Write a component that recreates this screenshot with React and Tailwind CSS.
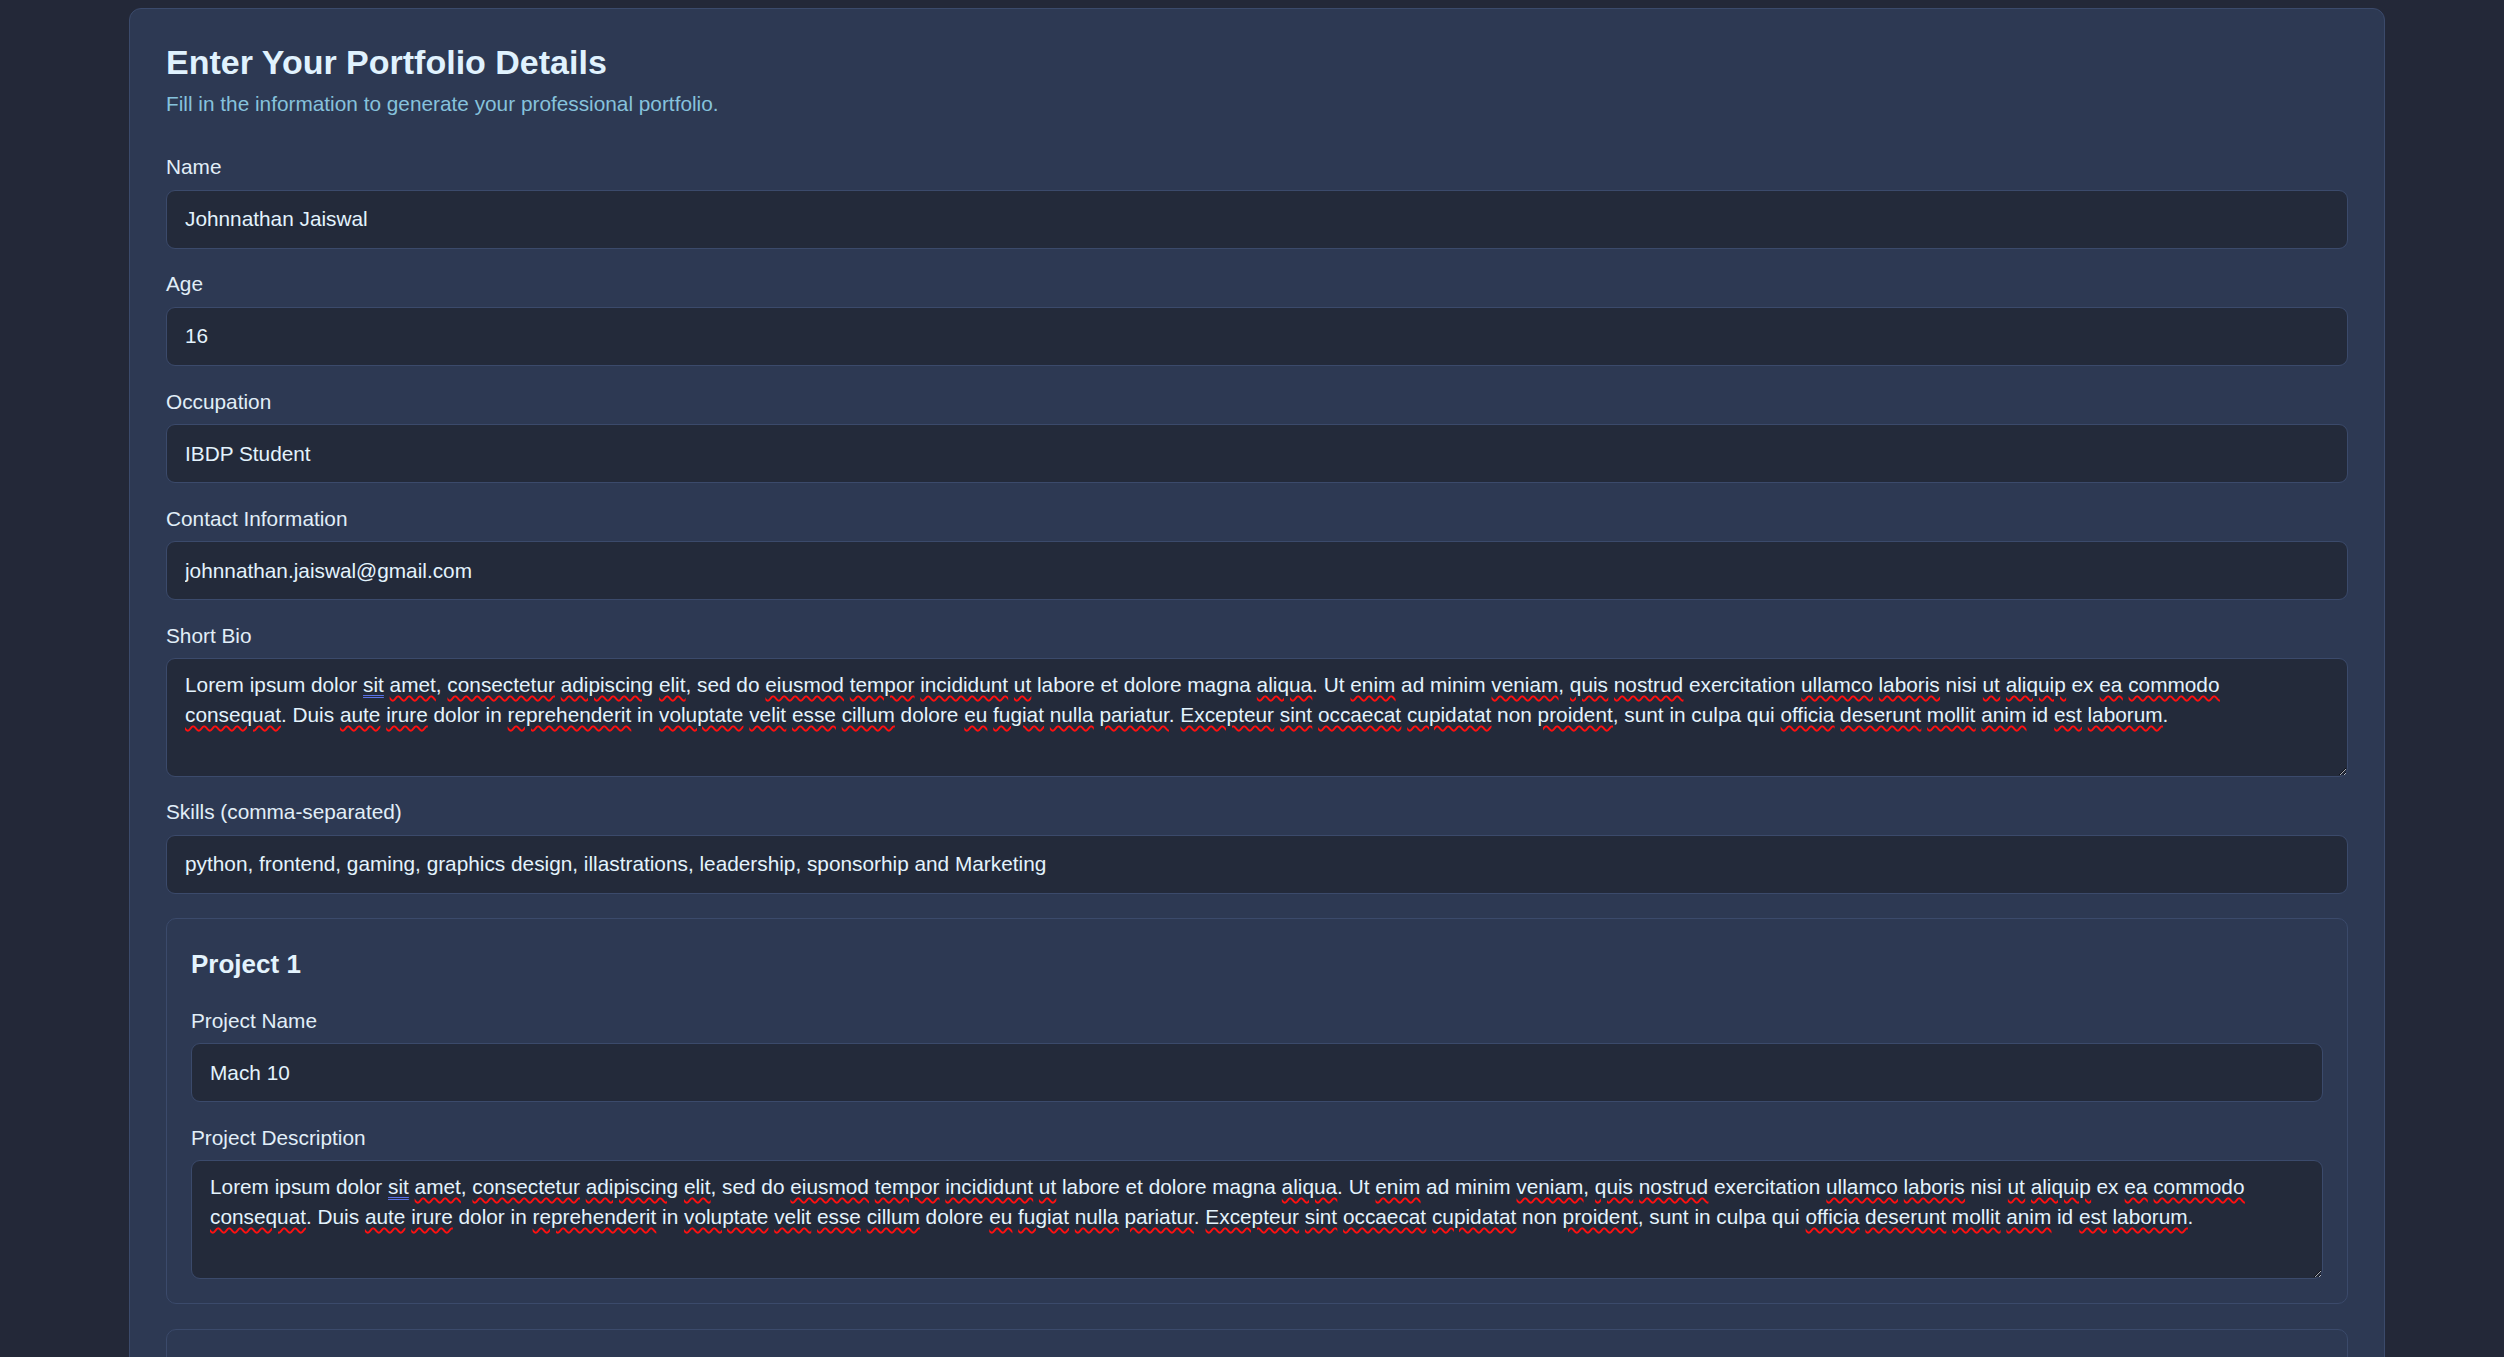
import React, { useState } from 'react';

const LOREM =
  'Lorem ipsum dolor sit amet, consectetur adipiscing elit, sed do eiusmod tempor incididunt ut labore et dolore magna aliqua. Ut enim ad minim veniam, quis nostrud exercitation ullamco laboris nisi ut aliquip ex ea commodo consequat. Duis aute irure dolor in reprehenderit in voluptate velit esse cillum dolore eu fugiat nulla pariatur. Excepteur sint occaecat cupidatat non proident, sunt in culpa qui officia deserunt mollit anim id est laborum.';

// mots soulignés par le correcteur du navigateur
const MISSPELLED = new Set(
  'amet consectetur adipiscing elit eiusmod tempor incididunt ut aliqua enim veniam quis nostrud ullamco laboris aliquip ea commodo consequat aute irure reprehenderit voluptate velit esse cillum eu fugiat nulla pariatur Excepteur sint occaecat cupidatat proident officia deserunt mollit anim est laborum'.split(' ')
);
const GRAMMAR = new Set(['sit']);

const Squiggles = ({ text }) =>
  text.split(/(\s+)/).map((tok, i) => {
    const m = tok.match(/^([A-Za-z]+)(.*)$/);
    if (!m) return <span key={i}>{tok}</span>;
    const [, word, rest] = m;
    let cls = '';
    if (MISSPELLED.has(word)) cls = 'underline decoration-wavy decoration-[#ff1010] decoration-[1.5px] underline-offset-[3px]';
    if (GRAMMAR.has(word)) cls = 'underline decoration-double decoration-[#5a72e6] decoration-1 underline-offset-[3px]';
    return (
      <span key={i}>
        <span className={cls}>{word}</span>
        {rest}
      </span>
    );
  });

// champ simple : label + input
const Field = ({ label, value, onChange, last }) => (
  <div className={last ? '' : 'mb-[23.8px]'}>
    <label className="block text-[20.8px] leading-[24px] text-[#e1eef8] mb-[10.5px]">{label}</label>
    <input
      type="text"
      value={value}
      onChange={(e) => onChange(e.target.value)}
      className="block w-full h-[59px] pl-[18px] pr-[17px] rounded-[9px] border border-[#3b4a6b] bg-[#232a3a] text-[20.8px] text-[#e3f3fd] outline-none"
    />
  </div>
);

// champ multiligne (avec soulignement du correcteur par-dessus)
const AreaField = ({ label, value, onChange, last }) => (
  <div className={last ? '' : 'mb-[23.8px]'}>
    <label className="block text-[20.8px] leading-[24px] text-[#e1eef8] mb-[10px]">{label}</label>
    <div className="relative">
      <textarea
        value={value}
        spellCheck={false}
        onChange={(e) => onChange(e.target.value)}
        className="block w-full h-[118.5px] pl-[18px] pr-[40px] pt-[11px] rounded-[9px] border border-[#3b4a6b] bg-[#232a3a] text-[20.8px] leading-[30px] text-[#e3f3fd] outline-none whitespace-pre-wrap break-words"
      />
      <div className="pointer-events-none absolute inset-0 overflow-hidden border border-transparent pl-[18px] pr-[40px] pt-[11px] text-[20.8px] leading-[30px] text-transparent whitespace-pre-wrap break-words">
        <Squiggles text={value} />
      </div>
    </div>
  </div>
);

const ProjectCard = ({ index, project, onChange }) => (
  <div className="mb-[25px] rounded-[10px] border border-[#3b4a6b] bg-[#2d3953] p-[24px]">
    <h3 className="mt-[6px] mb-[30px] text-[26px] leading-[30px] font-bold text-[#e3f3fd]">Project {index + 1}</h3>
    <Field label="Project Name" value={project.name} onChange={(v) => onChange({ ...project, name: v })} />
    <AreaField
      label="Project Description"
      value={project.description}
      onChange={(v) => onChange({ ...project, description: v })}
      last
    />
  </div>
);

export default function App() {
  const [form, setForm] = useState({
    name: 'Johnnathan Jaiswal',
    age: '16',
    occupation: 'IBDP Student',
    contact: 'johnnathan.jaiswal@gmail.com',
    bio: LOREM,
    skills: 'python, frontend, gaming, graphics design, illastrations, leadership, sponsorhip and Marketing',
  });
  const [projects, setProjects] = useState([
    { name: 'Mach 10', description: LOREM },
    { name: '', description: '' },
  ]);

  const set = (key) => (v) => setForm({ ...form, [key]: v });

  return (
    <div className="min-h-screen bg-[#232838] font-['Liberation_Sans',Arial,sans-serif] pt-[8px] pb-10">
      <div className="ml-[129px] w-[2256px] rounded-[12px] border border-[#3b4a6b] bg-[#2d3953] px-[36px] pt-[34px] pb-[36px]">
        <h2 className="text-[34px] leading-[39px] font-bold text-[#e0f2fe]">Enter Your Portfolio Details</h2>
        <p className="mt-[10px] text-[20.8px] leading-[24px] text-[#86c2dc]">
          Fill in the information to generate your professional portfolio.
        </p>

        <form className="mt-[39px]" onSubmit={(e) => e.preventDefault()}>
          <Field label="Name" value={form.name} onChange={set('name')} />
          <Field label="Age" value={form.age} onChange={set('age')} />
          <Field label="Occupation" value={form.occupation} onChange={set('occupation')} />
          <Field label="Contact Information" value={form.contact} onChange={set('contact')} />
          <AreaField label="Short Bio" value={form.bio} onChange={set('bio')} />
          <Field label="Skills (comma-separated)" value={form.skills} onChange={set('skills')} />

          {projects.map((p, i) => (
            <ProjectCard
              key={i}
              index={i}
              project={p}
              onChange={(np) => setProjects(projects.map((q, j) => (j === i ? np : q)))}
            />
          ))}

          <button
            type="submit"
            className="rounded-[9px] bg-[#3b82f6] px-6 py-3 text-[20.8px] font-bold text-white"
          >
            Generate Portfolio
          </button>
        </form>
      </div>
    </div>
  );
}
